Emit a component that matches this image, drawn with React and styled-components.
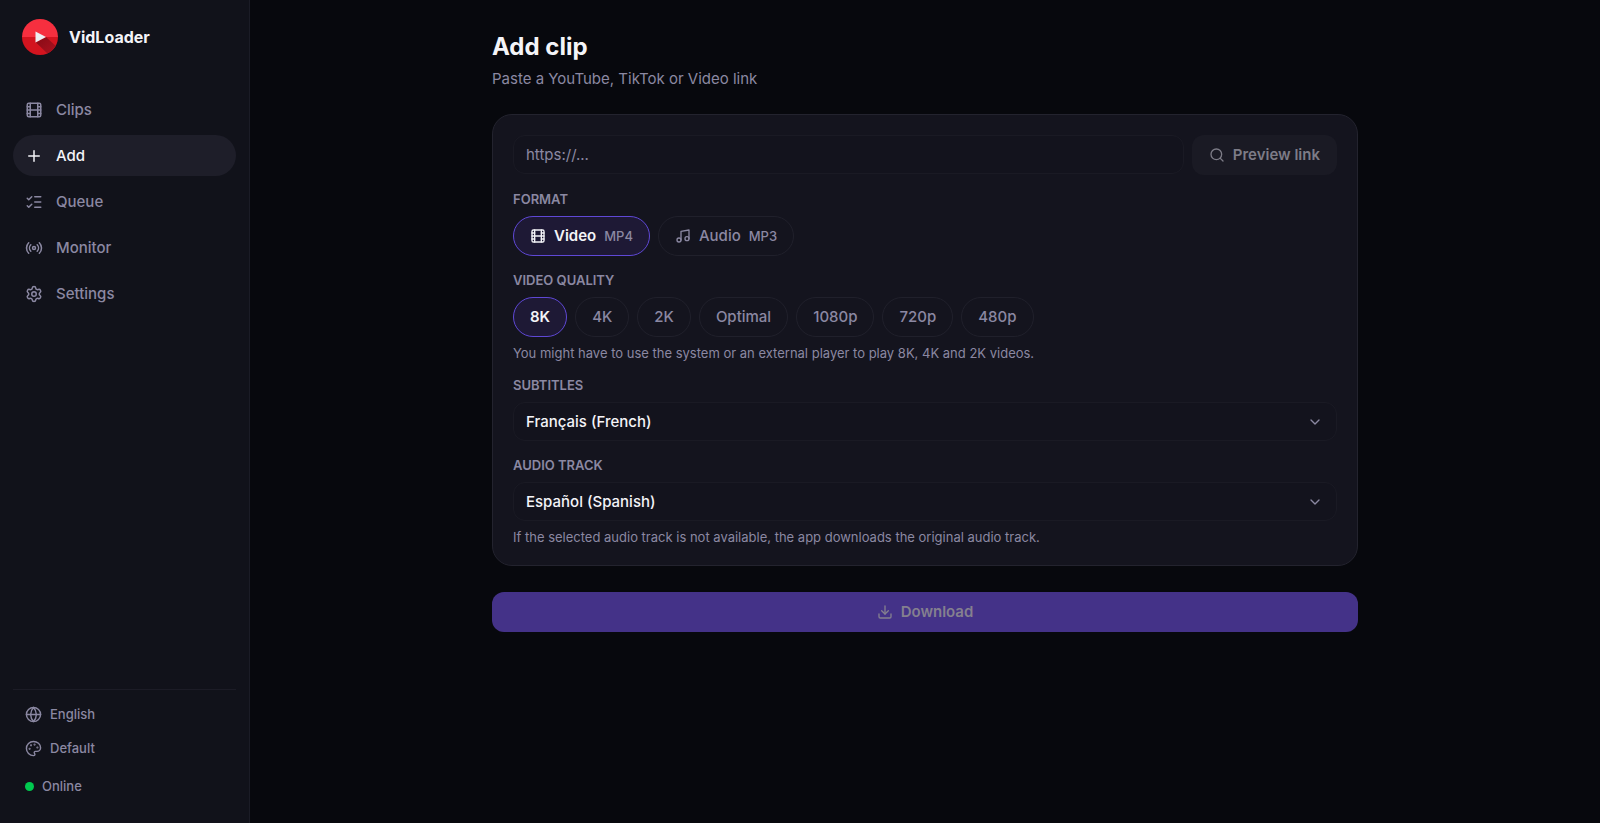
import React, { useState } from 'react'
import styled, { createGlobalStyle } from 'styled-components'
import {
  Film,
  Plus,
  ListChecks,
  Radio,
  Settings,
  Globe,
  Palette,
  Search,
  Music,
  ChevronDown,
  Download,
} from 'lucide-react'

const GlobalStyle = createGlobalStyle`
  * {
    box-sizing: border-box;
  }

  body {
    margin: 0;
    background: #07080d;
    color: #f4f4f8;
    font-family: Inter, 'Liberation Sans', sans-serif;
    font-size: 15px;
    line-height: 20px;
  }

  button, input, select {
    font: inherit;
    color: inherit;
  }
`

const Layout = styled.div`
  display: flex;
  min-height: 100vh;
`

const Sidebar = styled.aside`
  display: flex;
  flex-direction: column;
  flex: none;
  width: 250px;
  padding: 18px 13px 16px;
  background: #11121a;
  border-right: 1px solid #1b1c26;
`

const Brand = styled.div`
  display: flex;
  align-items: center;
  gap: 10px;
  padding: 0 8px;
  margin-bottom: 33px;
  font-size: 16px;
  font-weight: 700;
`

const Nav = styled.nav`
  display: flex;
  flex-direction: column;
  gap: 5px;
`

const NavLink = styled.a`
  display: flex;
  align-items: center;
  gap: 13px;
  height: 41px;
  padding: 0 12px;
  border-radius: 21px;
  font-weight: 500;
  text-decoration: none;
  color: ${(props) => (props.$active ? '#f4f4f8' : '#8b88a2')};
  background: ${(props) => (props.$active ? '#1e1e29' : 'transparent')};
`

const SidebarFooter = styled.div`
  display: flex;
  flex-direction: column;
  margin-top: auto;
  padding-top: 7px;
  border-top: 1px solid #1c1c26;
  font-size: 13px;
  font-weight: 500;
  color: #8b88a2;
`

const FooterButton = styled.button`
  display: flex;
  align-items: center;
  gap: 8px;
  height: 34px;
  padding: 0 12px;
  border: 0;
  background: none;
`

const Status = styled.div`
  display: flex;
  align-items: center;
  gap: 8px;
  height: 42px;
  padding: 0 12px;
`

const StatusDot = styled.span`
  width: 9px;
  height: 9px;
  border-radius: 50%;
  background: #00c94f;
`

const Main = styled.main`
  flex: 1;
  padding: 32px 24px;
`

const Content = styled.div`
  max-width: 866px;
  margin: 0 auto;
`

const Title = styled.h1`
  margin: 0 0 7px;
  font-size: 24px;
  line-height: 30px;
  font-weight: 700;
`

const Subtitle = styled.p`
  margin: 0 0 25px;
  color: #8b88a2;
`

const Card = styled.section`
  padding: 20px;
  margin-bottom: 26px;
  border: 1px solid #23232e;
  border-radius: 20px;
  background: #14141e;
`

const LinkRow = styled.div`
  display: flex;
  align-items: flex-start;
  gap: 8px;
`

const LinkInput = styled.input`
  flex: 1;
  min-width: 0;
  height: 39px;
  padding: 0 12px;
  border: 1px solid #1a1a24;
  border-radius: 12px;
  background: #13131d;
  outline: none;

  &::placeholder {
    color: #8b88a2;
    opacity: 1;
  }
`

const PreviewButton = styled.button`
  display: flex;
  align-items: center;
  gap: 8px;
  height: 40px;
  padding: 0 17px;
  border: 0;
  border-radius: 12px;
  background: #1a1a24;
  color: #7d7c87;
  font-weight: 600;
`

const Field = styled.div`
  margin-top: 16px;
`

const FieldLabel = styled.label`
  display: block;
  margin-bottom: 9px;
  font-size: 13px;
  line-height: 16px;
  font-weight: 600;
  text-transform: uppercase;
  color: #8b88a2;
`

const Pills = styled.div`
  display: flex;
  flex-wrap: wrap;
  gap: 8px;
`

const Pill = styled.button`
  display: flex;
  align-items: center;
  gap: 8px;
  height: 40px;
  padding: 0 16px;
  border: 1px solid ${(props) => (props.$active ? '#5f48d6' : '#20202b')};
  border-radius: 20px;
  background: ${(props) => (props.$active ? '#1e1935' : 'transparent')};
  color: ${(props) => (props.$active ? '#f4f4f8' : '#8b88a2')};
  font-weight: ${(props) => (props.$active ? 600 : 500)};
`

const Extension = styled.span`
  font-size: 13px;
  font-weight: 500;
  color: #8b88a2;
`

const SelectBox = styled.div`
  position: relative;
  display: flex;
  align-items: center;
`

const Select = styled.select`
  appearance: none;
  width: 100%;
  height: 39px;
  padding: 0 40px 0 12px;
  border: 1px solid #1a1a24;
  border-radius: 12px;
  background: #13131d;
  font-weight: 500;
`

const Chevron = styled(ChevronDown)`
  position: absolute;
  right: 14px;
  color: #8b88a2;
  pointer-events: none;
`

const Hint = styled.p`
  margin: 8px 0 0;
  font-size: 13px;
  line-height: 16px;
  color: #8b88a2;
`

const DownloadButton = styled.button`
  display: flex;
  align-items: center;
  justify-content: center;
  gap: 8px;
  width: 100%;
  height: 40px;
  border: 0;
  border-radius: 12px;
  background: #443288;
  color: #85808f;
  font-weight: 600;
`

const Logo = () => (
  <svg width="38" height="38" viewBox="0 0 38 38" aria-hidden="true">
    <defs>
      <clipPath id="disc">
        <circle cx="19" cy="19" r="18" />
      </clipPath>
      <linearGradient id="shade" x1="0" y1="0" x2="1" y2="1">
        <stop offset="0" stopColor="#860b16" />
        <stop offset="1" stopColor="#b01220" />
      </linearGradient>
    </defs>
    <g clipPath="url(#disc)">
      <rect width="38" height="19" fill="#f62f3f" />
      <rect y="19" width="38" height="19" fill="#d3141f" />
      <path d="M15 24.500 L25 19 L37 30 L29 38 Z" fill="url(#shade)" />
    </g>
    <path d="M14.500 13.500 L25 19 L14.500 24.500 Z" fill="#eceef2" />
  </svg>
)

const links = [
  { name: 'Clips', icon: Film },
  { name: 'Add', icon: Plus },
  { name: 'Queue', icon: ListChecks },
  { name: 'Monitor', icon: Radio },
  { name: 'Settings', icon: Settings },
]

const formats = [
  { name: 'Video', ext: 'MP4', icon: Film },
  { name: 'Audio', ext: 'MP3', icon: Music },
]

const qualities = ['8K', '4K', '2K', 'Optimal', '1080p', '720p', '480p']

const App = () => {
  const [format, setFormat] = useState('Video')
  const [quality, setQuality] = useState('8K')

  return (
    <>
      <GlobalStyle />
      <Layout>
        <Sidebar>
          <Brand>
            <Logo />
            VidLoader
          </Brand>
          <Nav>
            {links.map(({ name, icon: Icon }) => (
              <NavLink key={name} href={'#' + name.toLowerCase()} $active={name === 'Add'}>
                <Icon size={18} />
                {name}
              </NavLink>
            ))}
          </Nav>
          <SidebarFooter>
            <FooterButton type="button"><Globe size={17} />English</FooterButton>
            <FooterButton type="button"><Palette size={17} />Default</FooterButton>
            <Status><StatusDot />Online</Status>
          </SidebarFooter>
        </Sidebar>

        <Main>
          <Content>
            <Title>Add clip</Title>
            <Subtitle>Paste a YouTube, TikTok or Video link</Subtitle>

            <Card>
              <LinkRow>
                <LinkInput type="url" aria-label="Video link" placeholder="https://..." />
                <PreviewButton type="button" disabled><Search size={16} />Preview link</PreviewButton>
              </LinkRow>

              <Field role="group" aria-labelledby="format">
                <FieldLabel as="div" id="format">Format</FieldLabel>
                <Pills>
                  {formats.map(({ name, ext, icon: Icon }) => (
                    <Pill
                      key={name}
                      type="button"
                      aria-pressed={format === name}
                      $active={format === name}
                      onClick={() => setFormat(name)}
                    >
                      <Icon size={16} />
                      {name}
                      <Extension>{ext}</Extension>
                    </Pill>
                  ))}
                </Pills>
              </Field>

              <Field role="group" aria-labelledby="quality">
                <FieldLabel as="div" id="quality">Video quality</FieldLabel>
                <Pills>
                  {qualities.map((name) => (
                    <Pill
                      key={name}
                      type="button"
                      aria-pressed={quality === name}
                      $active={quality === name}
                      onClick={() => setQuality(name)}
                    >
                      {name}
                    </Pill>
                  ))}
                </Pills>
                <Hint>You might have to use the system or an external player to play 8K, 4K and 2K videos.</Hint>
              </Field>

              <Field>
                <FieldLabel htmlFor="subtitles">Subtitles</FieldLabel>
                <SelectBox>
                  <Select id="subtitles" defaultValue="fr">
                    <option value="fr">Français (French)</option>
                  </Select>
                  <Chevron size={16} />
                </SelectBox>
              </Field>

              <Field>
                <FieldLabel htmlFor="track">Audio track</FieldLabel>
                <SelectBox>
                  <Select id="track" defaultValue="es">
                    <option value="es">Español (Spanish)</option>
                  </Select>
                  <Chevron size={16} />
                </SelectBox>
                <Hint>If the selected audio track is not available, the app downloads the original audio track.</Hint>
              </Field>
            </Card>

            <DownloadButton type="button" disabled><Download size={16} />Download</DownloadButton>
          </Content>
        </Main>
      </Layout>
    </>
  )
}

export default App
